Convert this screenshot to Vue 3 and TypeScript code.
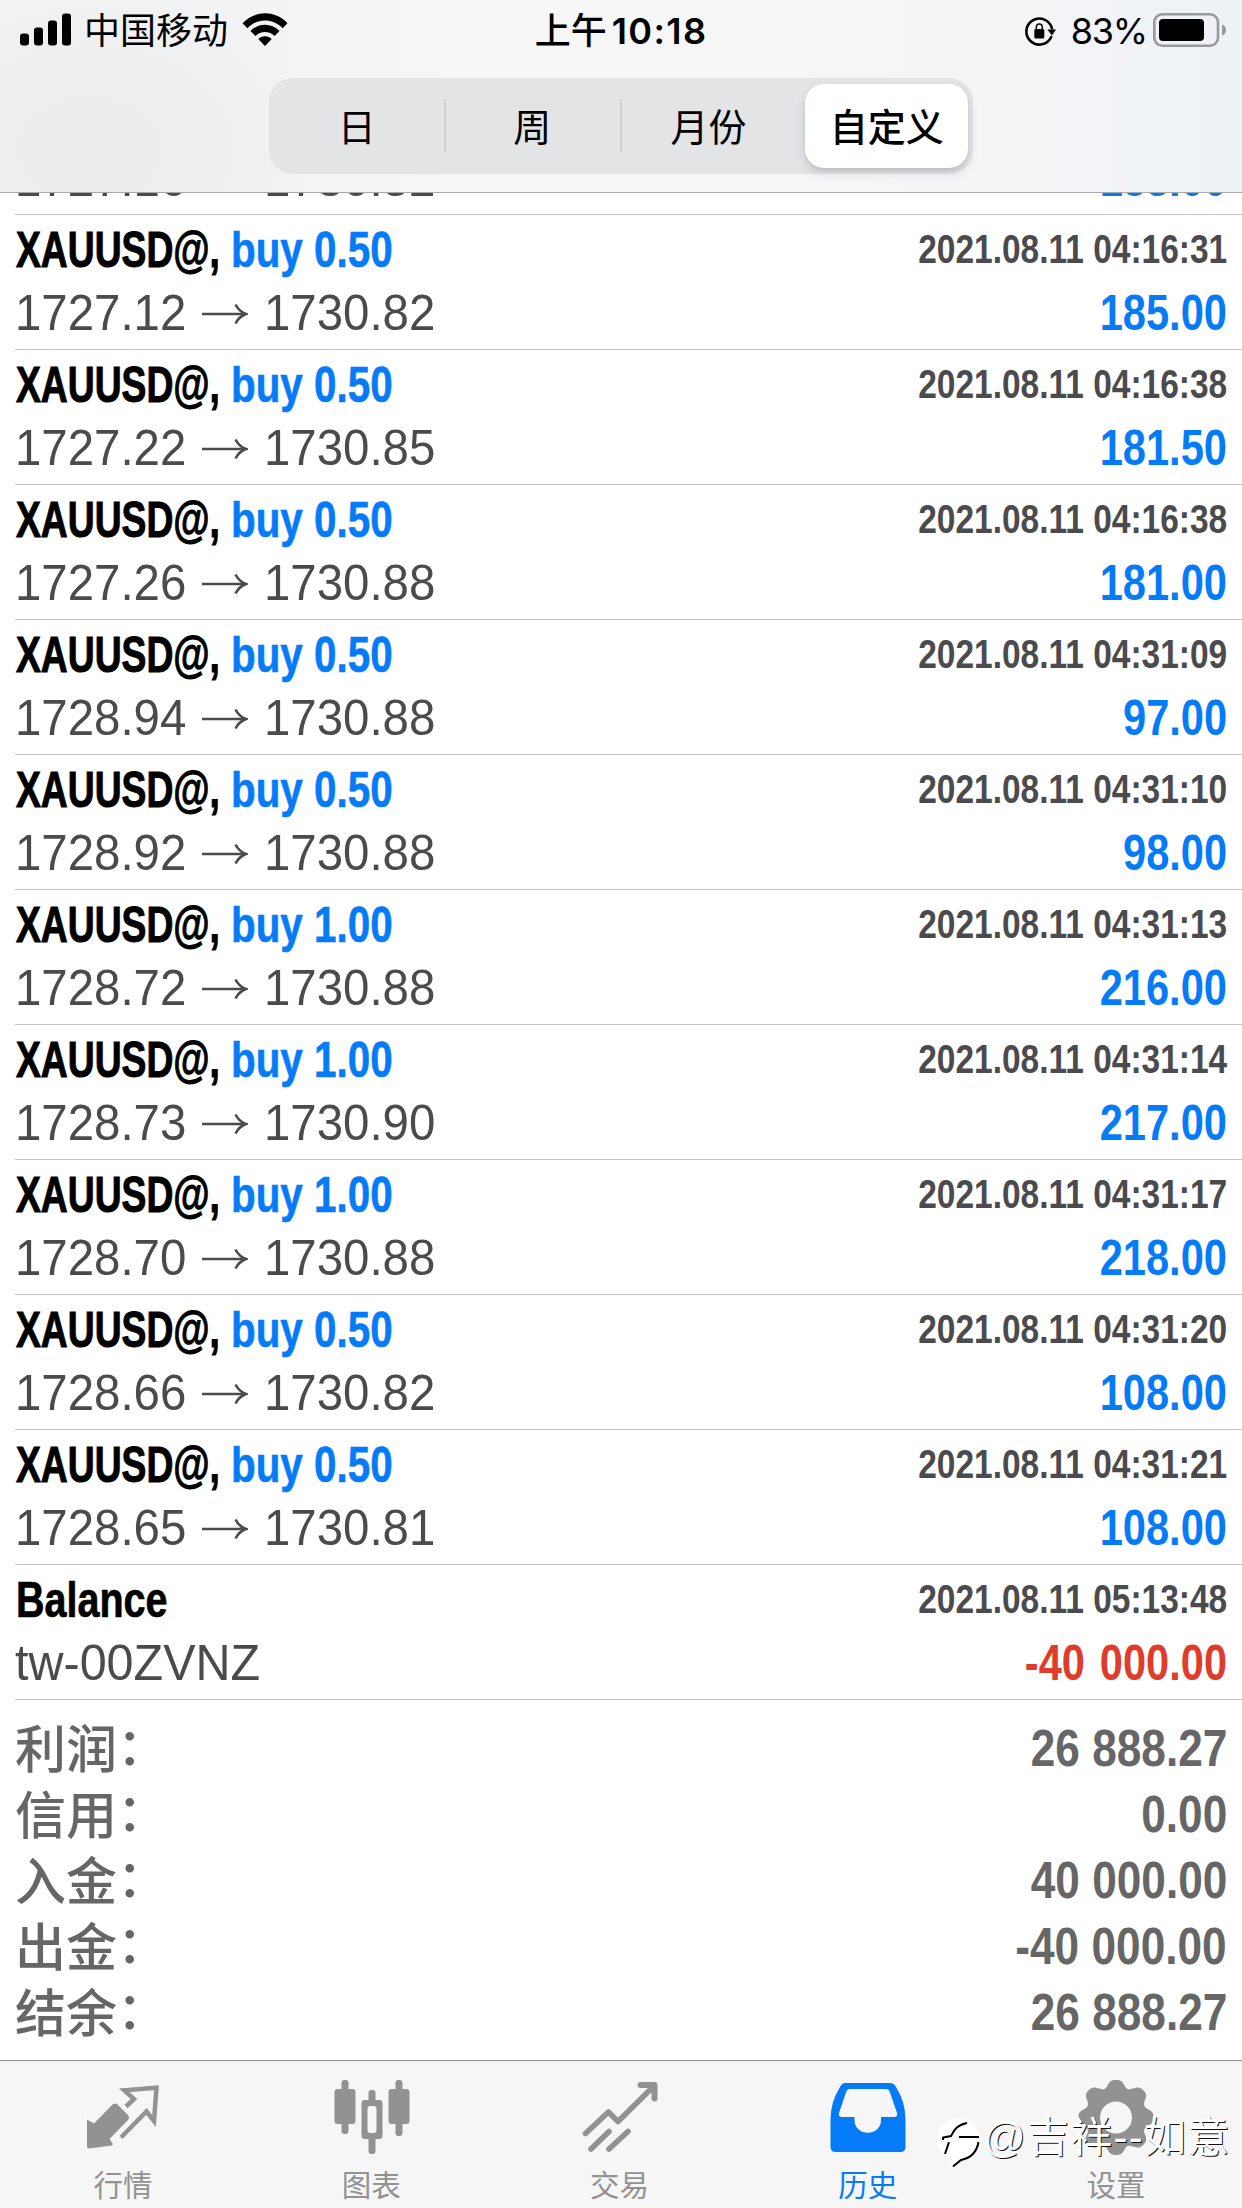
<script setup lang="ts">
interface Deal {
  volume: string
  open: string
  close: string
  time: string
  profit: string
}

const deals: Deal[] = [
  { volume: '0.50', open: '1727.12', close: '1730.82', time: '2021.08.11 04:16:31', profit: '185.00' },
  { volume: '0.50', open: '1727.22', close: '1730.85', time: '2021.08.11 04:16:38', profit: '181.50' },
  { volume: '0.50', open: '1727.26', close: '1730.88', time: '2021.08.11 04:16:38', profit: '181.00' },
  { volume: '0.50', open: '1728.94', close: '1730.88', time: '2021.08.11 04:31:09', profit: '97.00' },
  { volume: '0.50', open: '1728.92', close: '1730.88', time: '2021.08.11 04:31:10', profit: '98.00' },
  { volume: '1.00', open: '1728.72', close: '1730.88', time: '2021.08.11 04:31:13', profit: '216.00' },
  { volume: '1.00', open: '1728.73', close: '1730.90', time: '2021.08.11 04:31:14', profit: '217.00' },
  { volume: '1.00', open: '1728.70', close: '1730.88', time: '2021.08.11 04:31:17', profit: '218.00' },
  { volume: '0.50', open: '1728.66', close: '1730.82', time: '2021.08.11 04:31:20', profit: '108.00' },
  { volume: '0.50', open: '1728.65', close: '1730.81', time: '2021.08.11 04:31:21', profit: '108.00' },
]

const periods: string[] = ['日', '周', '月份', '自定义']
const activePeriod = 3

const summary: { label: string; value: string }[] = [
  { label: '利润', value: '26 888.27' },
  { label: '信用', value: '0.00' },
  { label: '入金', value: '40 000.00' },
  { label: '出金', value: '-40 000.00' },
  { label: '结余', value: '26 888.27' },
]
</script>

<template>
  <div class="screen">
    <header class="top">
      <div class="status">
        <div class="status-left">
          <svg class="signal" width="52" height="34" viewBox="0 0 52 34">
            <rect x="0" y="20.500" width="9" height="12" rx="3" />
            <rect x="14" y="14.500" width="9" height="18" rx="3" />
            <rect x="28" y="7.500" width="9" height="25" rx="3" />
            <rect x="42" y="0.500" width="9" height="32" rx="3" />
          </svg>
          <span class="carrier">中国移动</span>
          <svg class="wifi" width="46" height="34" viewBox="0 0 46 34">
            <path d="M0.500 10.200C13-3 33-3 45.500 10.200L40.600 15.200C30.500 5 15.500 5 5.400 15.200Z" />
            <path d="M8.500 18C16.500 9.600 29.500 9.600 37.500 18L32.600 23C27.200 17.500 18.800 17.500 13.400 23Z" />
            <path d="M16.300 26C20 22.300 26 22.300 29.700 26L23 33Z" />
          </svg>
        </div>
        <div class="clock"><span class="ampm">上午</span><span class="digits">10:18</span></div>
        <div class="status-right">
          <svg class="lock" width="34" height="32" viewBox="0 0 34 32">
            <path d="M27.200 21A13 13 0 1 1 28 12.500" fill="none" stroke="#000" stroke-width="2.600" stroke-linecap="round" />
            <path d="M23.300 13.500H32L28 19.500Z" />
            <rect x="10.300" y="13" width="10" height="9.500" rx="1.500" />
            <path d="M12.300 14V11.500A3 3.400 0 0 1 18.300 11.500V14" fill="none" stroke="#000" stroke-width="1.500" />
          </svg>
          <span class="percent">83%</span>
          <svg class="battery" width="74" height="36" viewBox="0 0 74 36">
            <rect x="1.300" y="1.300" width="63.700" height="31.400" rx="8" fill="none" stroke="#97999b" stroke-width="2.600" />
            <rect x="6" y="6" width="45" height="22" rx="4" />
            <path d="M69 11.500C74.300 12.500 74.300 21.500 69 22.500Z" fill="#97999b" />
          </svg>
        </div>
      </div>
      <nav class="segments">
        <button
          v-for="(p, i) in periods"
          :key="p"
          class="segment"
          :class="{ active: i === activePeriod, divided: i === 1 || i === 2 }"
        >
          <span>{{ p }}</span>
        </button>
      </nav>
    </header>

    <main class="history">
      <div class="deal scrolled">
        <div class="line second">
          <div class="prices">
            <span class="price">1727.16</span>
            <span class="gap"></span>
            <span class="price">1730.82</span>
          </div>
          <span class="amount">183.00</span>
        </div>
      </div>
      <div v-for="(d, i) in deals" :key="i" class="deal">
        <div class="line first">
          <div class="names">
            <span class="symbol">XAUUSD@,</span>
            <span class="side">buy {{ d.volume }}</span>
          </div>
          <span class="time">{{ d.time }}</span>
        </div>
        <div class="line second">
          <div class="prices">
            <span class="price">{{ d.open }}</span>
            <svg class="arrow" width="46" height="24" viewBox="0 0 46 24">
              <path d="M0 12H43M33.500 2.500Q37 9.500 44 12Q37 14.500 33.500 21.500" fill="none" stroke="#4b4b4e" stroke-width="2.600" />
            </svg>
            <span class="price">{{ d.close }}</span>
          </div>
          <span class="amount">{{ d.profit }}</span>
        </div>
      </div>
      <div class="deal">
        <div class="line first">
          <div class="names"><span class="balance">Balance</span></div>
          <span class="time">2021.08.11 05:13:48</span>
        </div>
        <div class="line second">
          <span class="comment">tw-00ZVNZ</span>
          <span class="amount loss">-40 000.00</span>
        </div>
      </div>

      <dl class="summary">
        <div v-for="s in summary" :key="s.label" class="total">
          <dt>{{ s.label }}<span class="colon">：</span></dt>
          <dd>{{ s.value }}</dd>
        </div>
      </dl>
    </main>

    <footer class="tabs">
      <div class="tab">
        <svg width="76" height="76" viewBox="0 0 76 76">
          <path d="M2 33.500L9 37.500L27.500 18.500Q30 16.300 32.500 18.500L43 29Q45 31.500 43 34L24.500 53L28 58L27 59.500L4 62.500Q2 62.500 2 60.500Z" />
          <path d="M41 20.500L49 13L39.300 4.300L71.500 1.800L69 35L61.500 25.500L36 51.500" fill="none" stroke="#929292" stroke-width="4.500" />
        </svg>
        <span>行情</span>
      </div>
      <div class="tab">
        <svg width="76" height="76" viewBox="-1 0 76 76">
          <rect x="0.500" y="3" width="21" height="35" rx="3" />
          <rect x="7.500" y="-6" width="7" height="54" rx="3" />
          <rect x="54.500" y="3" width="21" height="35" rx="3" />
          <rect x="61.500" y="-6" width="7" height="56" rx="3" />
          <rect x="34.500" y="4" width="7" height="64" rx="3" />
          <rect x="27.500" y="14" width="21" height="39" rx="3" />
          <rect x="33.500" y="20" width="9" height="27" rx="3" fill="#f7f7f7" />
        </svg>
        <span>图表</span>
      </div>
      <div class="tab">
        <svg width="76" height="76" viewBox="0 0 76 76">
          <g fill="none" stroke="#929292" stroke-width="5.600" stroke-linecap="round" stroke-linejoin="round">
            <path d="M3.500 47.500L26.500 26L36 35.500L72 0" />
            <path d="M58.500-1H72.500V12.500" stroke-width="6" />
            <path d="M9 63L27 45.500M27 63L46 45.500" />
          </g>
        </svg>
        <span>交易</span>
      </div>
      <div class="tab current">
        <svg width="76" height="76" viewBox="0 0 76 76">
          <path
            fill-rule="evenodd"
            d="M15-3H60Q64-3 66 1Q75.500 16 75.500 34V61Q75.500 66 70.500 66H5.500Q0.500 66 0.500 61V34Q0.500 16 10 1Q12-3 15-3ZM20 3Q17.500 3 16.500 5L9 27Q8 31 12 31H24.500V34C24.500 51 51 51 51 34V31H64Q68 31 67 27L59.500 5Q58.500 3 56 3Z"
          />
        </svg>
        <span>历史</span>
      </div>
      <div class="tab">
        <svg width="76" height="76" viewBox="0 0 76 76">
          <path
            fill-rule="evenodd"
            d="M31-3Q33-6 36-6H40Q43-6 45-3L48 2Q50 4 53 3L59 1.500Q62 1 64 3L67 6Q68.500 8 68 11L66 17Q65.500 20 68 22L73 25Q75.500 27 75.500 29V34Q75.500 37 73 38L68 41Q65.500 43 66 46L68 51Q68.500 55 67 57L64 60Q62 62 59 61.500L53 60Q50 59 48 61L45 66Q43 69 40 69H36Q33 69 31 66L28 61Q26 59 23 60L17 61.500Q14 62 12 60L9 57Q7.500 55 8 51L10 46Q10.500 43 8 41L3 38Q0.500 37 0.500 34V29Q0.500 27 3 25L8 22Q10.500 20 10 17L8 11Q7.500 8 9 6L12 3Q14 1 17 1.500L23 3Q26 4 28 2ZM38 15.500A16 16 0 1 0 38 47.500A16 16 0 1 0 38 15.500Z"
          />
        </svg>
        <span>设置</span>
      </div>
      <div class="watermark">
        <svg width="44" height="52" viewBox="0 0 44 52">
          <path d="M21 1A21 21 0 0 1 43 22C43 34 36 41 24 44L16 51L12 41A21 21 0 0 1 21 1Z" fill="#fff" />
          <path d="M6 23V20.500L14 19C17 14 19 8 30 6M22 20H42M41.500 25C40 34 34 41 24 43L16 49.500M12 25L8 37" fill="none" stroke="#000" stroke-width="2" />
        </svg>
        <span>@吉祥--如意</span>
      </div>
    </footer>
  </div>
</template>

<style>
body {
  margin: 0;
  background: #fff;
}
</style>

<style scoped>
.screen {
  position: relative;
  display: flex;
  flex-direction: column;
  width: 1242px;
  height: 2208px;
  overflow: hidden;
  background: #fff;
  font-family: 'Liberation Sans', 'Noto Sans CJK SC', sans-serif;
}

.top {
  flex: none;
  box-sizing: border-box;
  height: 193px;
  border-bottom: 1px solid #a9a9ab;
  background:
    radial-gradient(ellipse 230px 170px at 90px 150px, #ededee 0, #eeeeef 45%, rgba(240, 240, 242, 0) 100%),
    linear-gradient(90deg, #f3f3f4 0, #f2f3f5 270px, #f7f7f7 500px, #f6f6f7 800px, #f3f4f6 1060px, #edf2f6 1242px);
}

.status {
  display: grid;
  grid-template-columns: 1fr auto 1fr;
  height: 78px;
  font-family: 'Inter', 'Noto Sans CJK SC', sans-serif;
  font-size: 36px;
  line-height: 63px;
}

.status-left,
.status-right {
  display: flex;
  align-items: flex-start;
}

.status-left {
  padding-left: 20px;
}

.signal,
.wifi {
  margin-top: 13px;
}

.carrier {
  margin: 0 14px 0 12px;
}

.clock {
  display: flex;
  font-weight: 600;
}

.ampm {
  margin-right: 5px;
  font-weight: 500;
}

.digits {
  letter-spacing: 1.400px;
}

.status-right {
  justify-content: flex-end;
  padding-right: 15px;
}

.lock {
  margin: 16px 13px 0 0;
}

.percent {
  letter-spacing: -1.200px;
}

.battery {
  margin: 13px 0 0 6px;
}

.segments {
  display: grid;
  grid-template-columns: repeat(4, 176.200px);
  width: 704.800px;
  height: 96px;
  margin: 0 auto;
  border-radius: 24px;
  background: #e3e4e6;
}

.segment {
  display: flex;
  justify-content: center;
  padding: 0;
  border: 0;
  background: none;
  font: 400 38px/94px 'Noto Sans CJK SC', sans-serif;
  color: #000;
}

.segment.divided {
  background: linear-gradient(#cfd0d2, #cfd0d2) left 0 top 21px / 2px 53px no-repeat;
  margin-left: -1px;
}

.segment.active {
  margin: 6px 5px 6px 8px;
  border-radius: 19px;
  background: #fff;
  box-shadow: 0 5px 12px rgba(0, 0, 0, 0.12), 0 3px 3px rgba(0, 0, 0, 0.06);
  font-weight: 500;
  line-height: 81px;
}

.history {
  flex: 1;
  min-height: 0;
}

.deal {
  box-sizing: border-box;
  height: 135px;
  margin-left: 15px;
  padding-right: 15px;
  border-bottom: 1px solid #c2c2c4;
}

/* the row that is scrolled under the header */
.deal.scrolled {
  display: flex;
  flex-direction: column;
  justify-content: flex-end;
  height: 22px;
  padding-bottom: 4px;
  overflow: hidden;
}

.line {
  display: flex;
  flex: none;
  justify-content: space-between;
  white-space: nowrap;
}

.first {
  height: 67px;
  line-height: 70px;
  font-weight: 700;
}

.second {
  height: 62px;
  line-height: 62px;
}

.names {
  display: flex;
  margin-left: 1px;
  font-size: 50px;
}

.symbol {
  width: 215px;
  transform: scaleX(0.745);
  transform-origin: left;
  -webkit-text-stroke: 1px currentColor;
}

.side {
  color: #067bf8;
  transform: scaleX(0.808);
  transform-origin: left;
  -webkit-text-stroke: 0.600px currentColor;
}

.balance {
  transform: scaleX(0.79);
  transform-origin: left;
  -webkit-text-stroke: 0.700px currentColor;
}

.time {
  font-size: 40px;
  line-height: 69px;
  color: #4b4b4e;
  transform: scaleX(0.837);
  transform-origin: right;
}

.prices {
  display: flex;
  align-items: center;
}

.price,
.comment {
  font-size: 50px;
  color: #4b4b4e;
  transform: scaleX(0.948);
  transform-origin: left;
}

.comment {
  transform: scaleX(0.97);
}

.price {
  width: 174px;
}

.arrow {
  margin: 1px 16px 0 13px;
}

.gap {
  width: 75px;
}

.amount {
  font-size: 50px;
  font-weight: 700;
  color: #067bf8;
  transform: scaleX(0.832);
  transform-origin: right;
}

.amount.loss {
  color: #e03c2b;
  word-spacing: 4px;
}

.summary {
  margin: 16px 15px 0;
}

.total {
  display: flex;
  justify-content: space-between;
  height: 66px;
  line-height: 65px;
  color: #666;
}

.total dt {
  font-family: 'Noto Sans CJK SC', sans-serif;
  font-size: 51px;
  font-weight: 500;
  line-height: 60px;
}

.colon {
  display: inline-block;
  transform: translate(0, -3px);
}

.total dd {
  margin: 0;
  font-size: 52px;
  font-weight: 700;
  transform: scaleX(0.85);
  transform-origin: right;
}

.tabs {
  position: relative;
  flex: none;
  box-sizing: border-box;
  display: grid;
  grid-template-columns: repeat(5, 248.250px);
  height: 148px;
  padding-top: 25px;
  border-top: 1px solid #8f8f91;
  background: #f6f6f7;
}

.tab {
  display: flex;
  flex-direction: column;
  align-items: center;
  margin-left: -2px;
  color: #929292;
  fill: #929292;
  font: 400 29.500px/42px 'Noto Sans CJK SC', sans-serif;
}

.tab svg {
  overflow: visible;
}

.tab.current {
  color: #067bf8;
  fill: #067bf8;
}

.watermark {
  position: absolute;
  top: 56px;
  left: 937px;
  display: flex;
  align-items: flex-start;
  gap: 2px;
  color: #fff;
  font: 400 42px/42px 'Liberation Sans', 'Noto Sans CJK SC', sans-serif;
  letter-spacing: 1.300px;
  text-shadow: 1px 1px 0 #111;
  white-space: nowrap;
}
</style>
